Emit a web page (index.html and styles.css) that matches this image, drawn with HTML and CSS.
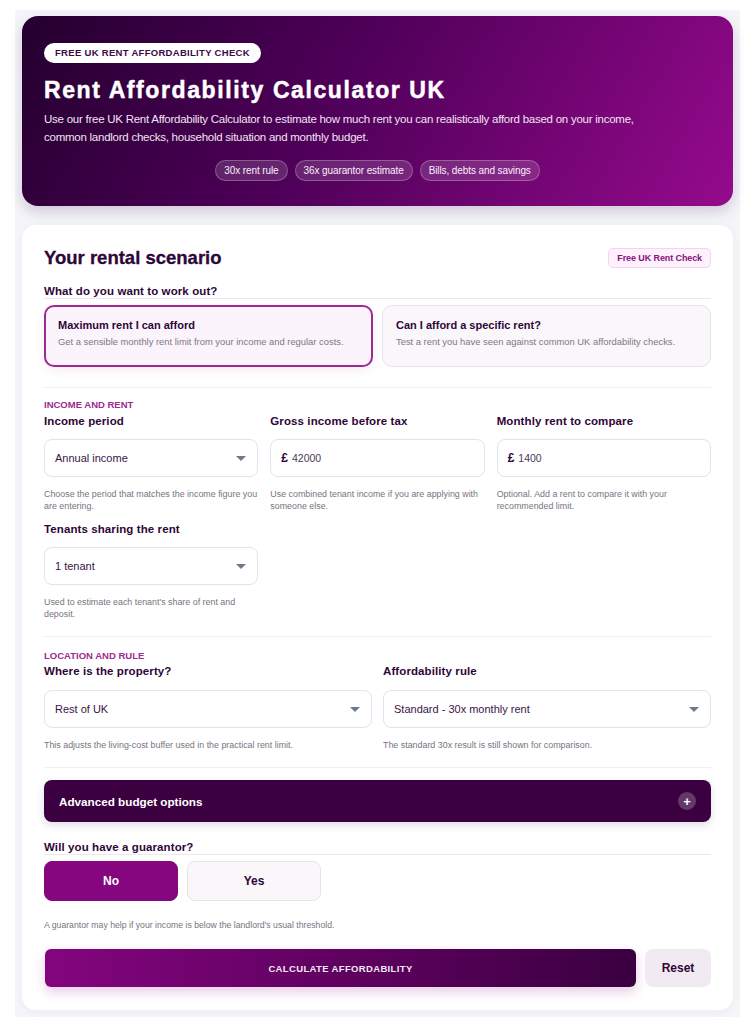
FILE: index.html
```html
<!DOCTYPE html>
<html lang="en">
<head>
<meta charset="utf-8">
<title>Rent Affordability Calculator UK</title>
<link rel="stylesheet" href="styles.css">
</head>
<body>
<div class="page">
  <header class="hero">
    <span class="hero-badge">FREE UK RENT AFFORDABILITY CHECK</span>
    <h1 class="hero-title">Rent Affordability Calculator UK</h1>
    <p class="hero-text">Use our free UK Rent Affordability Calculator to estimate how much rent you can realistically afford based on your income, common landlord checks, household situation and monthly budget.</p>
    <div class="hero-tags">
      <span class="tag">30x rent rule</span>
      <span class="tag">36x guarantor estimate</span>
      <span class="tag">Bills, debts and savings</span>
    </div>
  </header>

  <main class="card">
    <div class="card-head">
      <h2 class="card-title">Your rental scenario</h2>
      <span class="card-badge">Free UK Rent Check</span>
    </div>

    <div class="q-label">What do you want to work out?</div>
    <div class="modes">
      <div class="mode mode-active">
        <div class="mode-title">Maximum rent I can afford</div>
        <div class="mode-desc">Get a sensible monthly rent limit from your income and regular costs.</div>
      </div>
      <div class="mode">
        <div class="mode-title">Can I afford a specific rent?</div>
        <div class="mode-desc">Test a rent you have seen against common UK affordability checks.</div>
      </div>
    </div>

    <section class="section">
      <div class="section-title">INCOME AND RENT</div>
      <div class="grid3">
        <div class="field">
          <div class="label">Income period</div>
          <div class="control select"><span>Annual income</span><span class="caret"></span></div>
          <div class="help">Choose the period that matches the income figure you are entering.</div>
        </div>
        <div class="field">
          <div class="label">Gross income before tax</div>
          <div class="control"><span class="pound">£</span><span class="val">42000</span></div>
          <div class="help">Use combined tenant income if you are applying with someone else.</div>
        </div>
        <div class="field">
          <div class="label">Monthly rent to compare</div>
          <div class="control"><span class="pound">£</span><span class="val">1400</span></div>
          <div class="help">Optional. Add a rent to compare it with your recommended limit.</div>
        </div>
        <div class="field">
          <div class="label">Tenants sharing the rent</div>
          <div class="control select"><span>1 tenant</span><span class="caret"></span></div>
          <div class="help">Used to estimate each tenant's share of rent and deposit.</div>
        </div>
      </div>
    </section>

    <section class="section section-loc">
      <div class="section-title">LOCATION AND RULE</div>
      <div class="grid2">
        <div class="field">
          <div class="label">Where is the property?</div>
          <div class="control select"><span>Rest of UK</span><span class="caret"></span></div>
          <div class="help">This adjusts the living-cost buffer used in the practical rent limit.</div>
        </div>
        <div class="field">
          <div class="label">Affordability rule</div>
          <div class="control select"><span>Standard - 30x monthly rent</span><span class="caret"></span></div>
          <div class="help">The standard 30x result is still shown for comparison.</div>
        </div>
      </div>
    </section>

    <div class="section section-adv">
      <div class="advanced">
        <span>Advanced budget options</span>
        <span class="plus">+</span>
      </div>
    </div>

    <div class="q-label q-guar">Will you have a guarantor?</div>
    <div class="toggle">
      <button class="tbtn tbtn-on">No</button>
      <button class="tbtn">Yes</button>
    </div>
    <div class="help help-guar">A guarantor may help if your income is below the landlord's usual threshold.</div>

    <div class="actions">
      <button class="calc">CALCULATE AFFORDABILITY</button>
      <button class="reset">Reset</button>
    </div>
  </main>
</div>
</body>
</html>
```

FILE: styles.css
```css
* { box-sizing: border-box; }
html, body { margin: 0; padding: 0; background: #ffffff; }
body { font-family: "Liberation Sans", Arial, sans-serif; color: #2e0b3b; }

.page {
  margin: 10px 10px 8px 15px;
  background: #f4f5f9;
  padding: 6px 7px 7px 7px;
}

.hero {
  background: linear-gradient(120deg, #24002e 0%, #50005a 45%, #950a8c 100%);
  border-radius: 16px;
  padding: 26px 22px 25px 22px;
  color: #fff;
  box-shadow: 0 6px 14px rgba(60, 0, 70, 0.18);
}
.hero-badge {
  display: inline-block;
  background: #fff;
  color: #3a0a45;
  font-size: 9.5px;
  font-weight: 700;
  letter-spacing: 0.3px;
  padding: 5px 11px;
  border-radius: 12px;
  line-height: 10px;
}
.hero-title {
  margin: 13px 0 0 0;
  font-size: 23px;
  line-height: 28px;
  font-weight: 700;
  letter-spacing: 1.6px;
  -webkit-text-stroke: 0.5px #fff;
}
.hero-text {
  margin: 6px 0 0 0;
  max-width: 620px;
  font-size: 11.5px;
  line-height: 18px;
  letter-spacing: -0.25px;
  color: #f1e3f2;
}
.hero-tags {
  display: flex;
  justify-content: center;
  gap: 7px;
  margin-top: 14px;
}
.tag {
  font-size: 10px;
  line-height: 17px;
  padding: 1px 8px;
  border-radius: 11px;
  background: rgba(255, 255, 255, 0.14);
  border: 1px solid rgba(255, 255, 255, 0.25);
  color: #fbeefc;
  letter-spacing: -0.1px;
}

.card {
  margin-top: 19px;
  background: #fff;
  border-radius: 14px;
  padding: 22px 22px 23px 22px;
  box-shadow: 0 2px 8px rgba(40, 20, 60, 0.04);
}
.card-head {
  display: flex;
  justify-content: space-between;
  align-items: center;
}
.card-title {
  margin: 0;
  font-size: 18.5px;
  line-height: 22px;
  font-weight: 700;
  color: #2e0639;
  -webkit-text-stroke: 0.3px #2e0639;
}
.card-badge {
  font-size: 9px;
  font-weight: 700;
  color: #87107e;
  background: #fdf1fc;
  border: 1px solid #f5d2f1;
  border-radius: 5px;
  padding: 4px 8px;
  line-height: 10px;
  letter-spacing: -0.1px;
}

.q-label {
  margin-top: 16px;
  font-size: 11.5px;
  font-weight: 700;
  color: #2e0639;
  padding-bottom: 1px;
  border-bottom: 1px solid #ebe7ee;
  line-height: 12px;
  letter-spacing: 0.1px;
}
.modes {
  display: grid;
  grid-template-columns: 1fr 1fr;
  gap: 9px;
  margin-top: 6px;
}
.mode {
  height: 62px;
  border-radius: 10px;
  background: #f9f7fa;
  border: 1px solid #e8e2ec;
  padding: 12px 13px 0 13px;
}
.mode-active {
  background: #fcf4fc;
  border: 2px solid #9c2a92;
  padding: 11px 12px 0 12px;
  box-shadow: 0 4px 10px rgba(140, 20, 130, 0.08);
}
.mode-title {
  font-size: 11px;
  font-weight: 700;
  color: #2e0639;
  line-height: 14px;
}
.mode-desc {
  margin-top: 4px;
  font-size: 9.4px;
  color: #7d7784;
  line-height: 12px;
}

.section {
  margin-top: 20px;
  border-top: 1px solid #eef0f4;
  padding-top: 11px;
}
.section-loc {
  margin-top: 16px;
  padding-top: 13px;
}
.section-title {
  font-size: 9.5px;
  font-weight: 700;
  color: #9c2a92;
  line-height: 11px;
}
.grid3 {
  display: grid;
  grid-template-columns: 1fr 1fr 1fr;
  column-gap: 12px;
  row-gap: 11px;
  margin-top: 5px;
}
.grid2 {
  display: grid;
  grid-template-columns: 1fr 1fr;
  column-gap: 11px;
  margin-top: 4px;
}
.label {
  font-size: 11.5px;
  font-weight: 700;
  color: #2e0639;
  line-height: 13px;
  letter-spacing: 0.1px;
}
.control {
  margin-top: 11px;
  height: 38px;
  border: 1px solid #dfe5ee;
  border-radius: 8px;
  background: #fff;
  display: flex;
  align-items: center;
  padding: 0 10px;
  font-size: 11px;
  color: #3a1446;
}
.grid2 .control { margin-top: 12px; }
.select { justify-content: space-between; }
.caret {
  width: 0; height: 0;
  border-left: 5px solid transparent;
  border-right: 5px solid transparent;
  border-top: 5px solid #6c7a90;
  margin-right: 1px;
}
.pound {
  font-weight: 700;
  font-size: 12px;
  color: #2e0639;
  margin-right: 4px;
}
.val { font-size: 10.5px; color: #4a3a52; }
.help {
  margin-top: 11px;
  font-size: 8.9px;
  color: #777480;
  line-height: 12px;
}

.section-adv { margin-top: 16px; padding-top: 12px; }
.advanced {
  height: 42px;
  background: #3b003f;
  border-radius: 8px;
  display: flex;
  justify-content: space-between;
  align-items: center;
  padding: 0 15px 0 15px;
  color: #fff;
  font-size: 11.7px;
  font-weight: 700;
  box-shadow: 0 3px 8px rgba(60, 0, 70, 0.15);
}
.plus {
  width: 18px; height: 18px;
  border-radius: 50%;
  background: rgba(255, 255, 255, 0.22);
  display: flex;
  align-items: center;
  justify-content: center;
  font-size: 13px;
  line-height: 1;
  font-weight: 700;
}

.q-guar { margin-top: 19px; }
.toggle {
  display: flex;
  gap: 9px;
  margin-top: 6px;
}
.tbtn {
  width: 134px;
  height: 40px;
  border-radius: 8px;
  border: 1px solid #e8e2ec;
  background: #f9f7fa;
  color: #2e0639;
  font-family: "Liberation Sans", Arial, sans-serif;
  font-size: 12px;
  font-weight: 700;
}
.tbtn-on {
  background: #85067f;
  border-color: #85067f;
  color: #fff;
}
.help-guar { margin-top: 18px; font-size: 8.7px; }

.actions {
  display: flex;
  gap: 9px;
  margin-top: 18px;
}
.calc {
  flex: 1;
  height: 38px;
  border: none;
  border-radius: 6px;
  background: linear-gradient(90deg, #83057e 0%, #5c015d 55%, #3a0040 100%);
  color: #f4e8f5;
  font-family: "Liberation Sans", Arial, sans-serif;
  font-size: 9.5px;
  font-weight: 700;
  letter-spacing: 0.35px;
  box-shadow: 0 5px 12px rgba(150, 20, 140, 0.22);
  margin-left: 1px;
}
.reset {
  width: 66px;
  height: 38px;
  border: none;
  border-radius: 8px;
  background: #f1eaf2;
  color: #2e0639;
  font-family: "Liberation Sans", Arial, sans-serif;
  font-size: 12px;
  font-weight: 700;
}
```
